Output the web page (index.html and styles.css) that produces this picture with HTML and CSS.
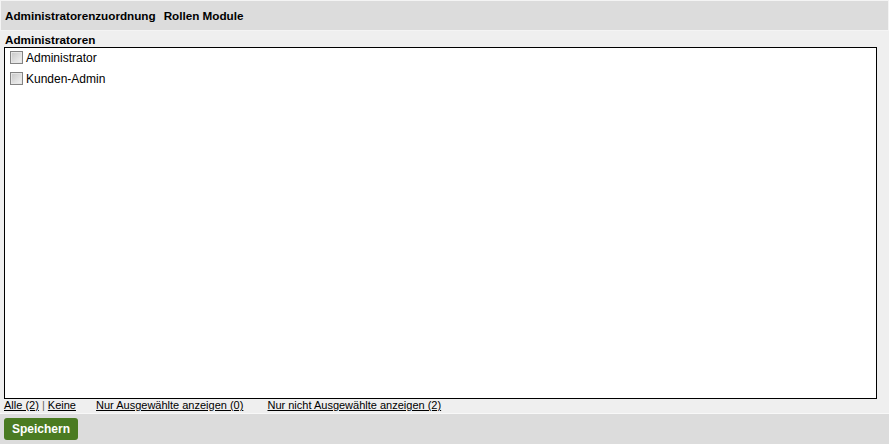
FILE: index.html
```html
<!DOCTYPE html>
<html lang="de">
<head>
    <meta charset="UTF-8">
    <title>Administratorenzuordnung</title>
    <link rel="stylesheet" href="styles.css">
</head>
<body>
    <!-- Tabs -->
    <div class="tabs">
        <span class="tab">Administratorenzuordnung</span>
        <span class="tab">Rollen Module</span>
    </div>

    <div class="content">
        <div class="list-title">Administratoren</div>
        <div class="list-box">
            <label class="item"><input type="checkbox"> Administrator</label>
            <label class="item"><input type="checkbox"> Kunden-Admin</label>
        </div>
        <div class="filters">
            <a href="#">Alle (2)</a> <span class="sep">|</span> <a href="#">Keine</a>
            <a href="#" class="filter">Nur Ausgewählte anzeigen (0)</a>
            <a href="#" class="filter">Nur nicht Ausgewählte anzeigen (2)</a>
        </div>
    </div>

    <div class="footer">
        <button class="btn-save">Speichern</button>
    </div>
</body>
</html>
```

FILE: styles.css
```css
* { margin: 0; padding: 0; box-sizing: border-box; }
body { font-family: "Liberation Sans", Arial, sans-serif; font-size: 12px; background: #efefef; color: #000; }

/* Tabs */
.tabs { background: #dcdcdc; border: 1px solid #f4f4f4; height: 31px; padding: 6px 0 0 4px; display: flex; gap: 8px; }
.tab { font-weight: bold; font-size: 11.7px; line-height: 17px; }

/* Content */
.content { padding: 1px 12px 0 4px; height: 382px; }
.list-title { font-weight: bold; font-size: 11.7px; line-height: 15px; padding-left: 1px; }
.list-box { background: #fff; border: 1px solid #000; height: 352px; padding: 0 5px; }
.item { display: flex; align-items: center; gap: 3px; height: 21px; margin-top: -1px; }
.item + .item { margin-top: 0; }
.item input { appearance: none; width: 13px; height: 13px; border: 1px solid #848484; background: linear-gradient(135deg, #c6c6c6, #f4f4f4); box-shadow: inset 0 0 0 1px #e6e6e6; }

/* Filter links */
.filters { font-size: 11px; line-height: 13px; }
.filters a { color: #000; }
.filters .sep { color: #666; }
.filters .filter { margin-left: 17px; }
.filters .filter:last-child { margin-left: 21px; }

/* Footer */
.footer { background: #dcdcdc; border-top: 1px solid #f8f8f8; height: 31px; padding: 4px 4px; }
.btn-save { background: #4a7b22; color: #fff; font-family: inherit; font-weight: bold; font-size: 12px; border: none; border-radius: 3px; width: 74px; height: 22px; }
```
